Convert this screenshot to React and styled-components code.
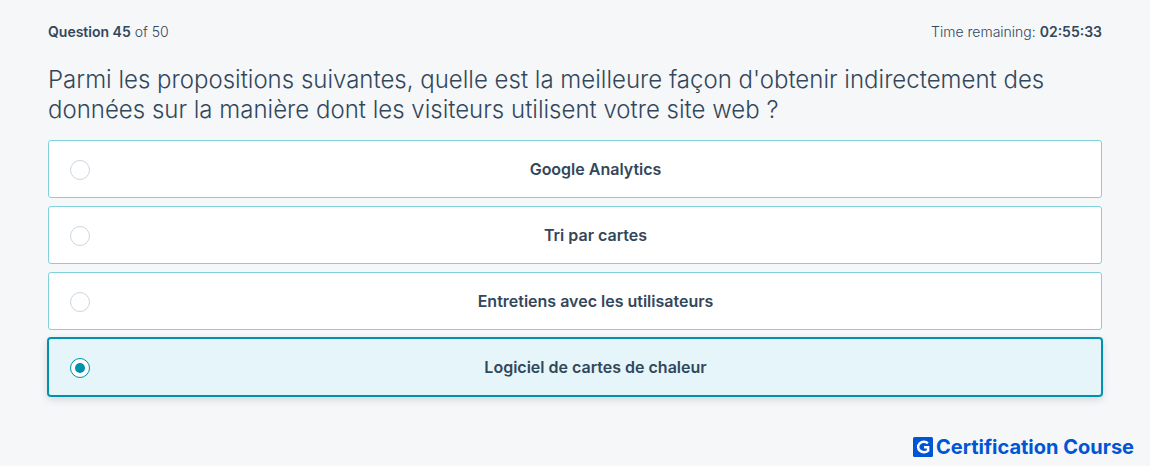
import React, { useState } from "react";
import styled, { createGlobalStyle } from "styled-components";

const GlobalStyle = createGlobalStyle`
  * {
    box-sizing: border-box;
  }
  body {
    margin: 0;
    background-color: #f5f7f9;
    color: #33475b;
    font-family: Inter, "Open Sans", sans-serif;
    font-size: 14px;
    font-weight: 300;
  }
`;

const Page = styled.div`
  min-height: 100vh;
  display: flex;
  flex-direction: column;
`;

const Quiz = styled.main`
  flex: 1;
  padding: 20px 48px 0;
`;

const StatusBar = styled.header`
  display: flex;
  justify-content: space-between;
  line-height: 24px;
`;

const Strong = styled.strong`
  font-weight: 600;
`;

const QuestionForm = styled.fieldset`
  border: 0;
  margin: 21px 0 0;
  padding: 0;
  min-width: 0;
`;

const QuestionTitle = styled.legend`
  padding: 0;
  margin-bottom: 15px;
  font-size: 24px;
  font-weight: 350;
  line-height: 30px;
`;

const OptionList = styled.div`
  display: grid;
  gap: 8px;
`;

const Option = styled.label`
  display: flex;
  align-items: center;
  height: 58px;
  padding-left: 21px;
  border: 1px solid ${(props) => (props.$selected ? "#0091ae" : "#7fd1de")};
  border-radius: 3px;
  background-color: ${(props) => (props.$selected ? "#e5f5f9" : "#ffffff")};
  box-shadow: ${(props) =>
    props.$selected
      ? "0 0 0 1px #0091ae, 0 3px 8px rgba(51, 71, 91, 0.2)"
      : "none"};
  cursor: pointer;
`;

const Radio = styled.input`
  appearance: none;
  display: grid;
  place-items: center;
  flex-shrink: 0;
  width: 20px;
  height: 20px;
  margin: 2px 0 0;
  border: 1px solid #cbd6e2;
  border-radius: 50%;
  background-color: #ffffff;

  &:checked {
    border-color: #0091ae;
  }

  &:checked::before {
    content: "";
    width: 10px;
    height: 10px;
    border-radius: 50%;
    background-color: #0091ae;
  }
`;

const OptionText = styled.span`
  flex: 1;
  text-align: center;
  font-size: 16px;
  line-height: 24px;
  font-weight: 600;
`;

const Footer = styled.footer`
  display: flex;
  justify-content: flex-end;
  padding: 0 16px 7px;
`;

const Brand = styled.div`
  display: flex;
  align-items: center;
  gap: 3px;
  color: #0055d4;
  font-size: 20px;
  line-height: 24px;
  font-weight: 700;
`;

const options = [
  "Google Analytics",
  "Tri par cartes",
  "Entretiens avec les utilisateurs",
  "Logiciel de cartes de chaleur",
];

const BrandMark = () => (
  <svg width="20" height="20" viewBox="0 0 20 20" aria-hidden="true">
    <rect width="20" height="20" rx="1.5" fill="#0055d4" />
    <path
      d="M14.9 6.2A5.8 5.2 0 1 0 15.1 13.6V10.2H11"
      fill="none"
      stroke="#ffffff"
      strokeWidth="2.5"
    />
  </svg>
);

const App = () => {
  const [selected, setSelected] = useState(3);

  return (
    <>
      <GlobalStyle />
      <Page>
        <Quiz>
          <StatusBar>
            <span>
              <Strong>Question 45</Strong> of 50
            </span>
            <span>
              Time remaining: <Strong>02:55:33</Strong>
            </span>
          </StatusBar>
          <QuestionForm>
            <QuestionTitle>
              Parmi les propositions suivantes, quelle est la meilleure façon
              d'obtenir indirectement des données sur la manière dont les
              visiteurs utilisent votre site web ?
            </QuestionTitle>
            <OptionList>
              {options.map((option, index) => (
                <Option key={option} $selected={selected === index}>
                  <Radio
                    type="radio"
                    name="answer"
                    value={option}
                    checked={selected === index}
                    onChange={() => setSelected(index)}
                  />
                  <OptionText>{option}</OptionText>
                </Option>
              ))}
            </OptionList>
          </QuestionForm>
        </Quiz>
        <Footer>
          <Brand>
            <BrandMark />
            Certification Course
          </Brand>
        </Footer>
      </Page>
    </>
  );
};

export default App;
